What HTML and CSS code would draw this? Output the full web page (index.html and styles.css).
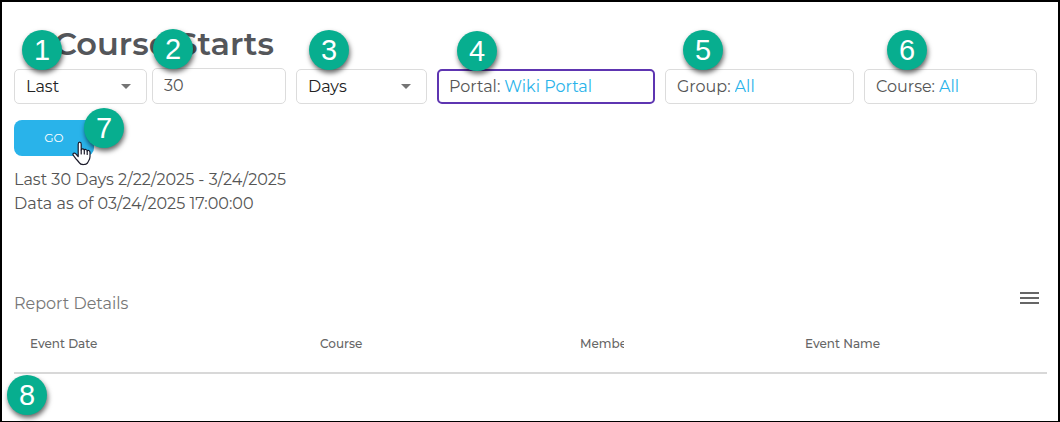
FILE: index.html
```html
<!DOCTYPE html>
<html lang="en">
<head>
    <meta charset="UTF-8">
    <meta name="viewport" content="width=device-width, initial-scale=1.0">
    <title>Course Starts</title>
    <link rel="stylesheet" href="styles.css">
</head>
<body>
    <main class="page">
        <h1>Course Starts</h1>

        <form class="filters" onsubmit="return false">
            <div class="filter-row">
                <div class="filter-pair">
                    <div class="field field-select">
                        <select id="range" aria-label="Range">
                            <option>Last</option>
                        </select>
                        <span class="badge badge-1">1</span>
                    </div>
                    <div class="field field-amount">
                        <input type="text" id="amount" value="30" aria-label="Amount">
                        <span class="badge badge-2">2</span>
                    </div>
                </div>
                <div class="field field-select">
                    <select id="unit" aria-label="Unit">
                        <option>Days</option>
                    </select>
                    <span class="badge badge-3">3</span>
                </div>
                <div class="field field-active">
                    <label for="portal">Portal:</label>
                    <input type="text" id="portal" class="value" value="Wiki Portal">
                    <span class="badge badge-4">4</span>
                </div>
                <div class="field">
                    <label for="group">Group:</label>
                    <input type="text" id="group" class="value" value="All">
                    <span class="badge badge-5">5</span>
                </div>
                <div class="field">
                    <label for="course">Course:</label>
                    <input type="text" id="course" class="value" value="All">
                    <span class="badge badge-6">6</span>
                </div>
            </div>

            <div class="actions">
                <button type="submit" class="btn-go">GO</button>
                <span class="badge badge-7">7</span>
                <svg class="pointer" width="20" height="26" viewBox="0 0 20 26" aria-hidden="true">
                    <path d="M6.2 15.5V3.2C6.2 0.5 9.2 0.5 9.2 3.2V9C9.6 7.4 12 7.6 12.3 9.2C12.8 8 14.9 8.3 15.2 10C15.8 8.9 18 9.4 18 11.4V15.8C18 18.4 16.8 19.6 15.8 21.4C14.6 24.2 8.6 24.2 7.2 21.6C6 19.6 4.4 18.6 3.2 16.8L1.2 14.2C0.3 12.6 2.2 11.4 3.6 12.6L6.2 15.5Z" fill="#fff" stroke="#1a1a2a" stroke-width="1.2" stroke-linejoin="round"/>
                    <path d="M9.2 9V13M12.3 9.2V13M15.2 10V13.5" fill="none" stroke="#1a1a2a" stroke-width="1.2" stroke-linecap="round"/>
                </svg>
            </div>
        </form>

        <div class="summary">
            <p>Last 30 Days 2/22/2025 - 3/24/2025</p>
            <p>Data as of 03/24/2025 17:00:00</p>
        </div>

        <section class="report">
            <div class="report-header">
                <h2>Report Details</h2>
                <button type="button" class="btn-menu" aria-label="Report menu">
                    <svg width="20" height="12" viewBox="0 0 20 12">
                        <path d="M0 1H19M0 6H19M0 11H19" stroke="#666" stroke-width="2"/>
                    </svg>
                </button>
            </div>
            <table>
                <thead>
                    <tr>
                        <th class="col-date">Event Date</th>
                        <th class="col-course">Course</th>
                        <th class="col-member"><span class="clipped">Member</span></th>
                        <th>Event Name</th>
                    </tr>
                </thead>
            </table>
            <span class="badge badge-8">8</span>
        </section>
    </main>
</body>
</html>
```

FILE: styles.css
```css
* {
    box-sizing: border-box;
}

body {
    margin: 0;
    font-family: Montserrat, Inter, sans-serif;
    font-size: 16px;
    line-height: 24px;
    font-weight: 400;
    color: #555;
    background: #fff;
}

.page {
    min-height: 100vh;
    padding: 22px 11px 0 12px;
    border: 2px solid #000;
    border-bottom-width: 1px;
}

h1 {
    margin: 0 0 4px;
    padding-left: 40px;
    font-size: 32px;
    line-height: 40px;
    font-weight: 600;
    color: #54565a;
}

input,
select,
button {
    font: inherit;
}

.filter-row {
    display: grid;
    grid-template-columns: 272fr 131fr 218fr 189fr 173fr;
    align-items: end;
    gap: 10px;
    padding-right: 10px;
}

.filter-pair {
    display: grid;
    grid-template-columns: 133fr 134fr;
    align-items: end;
    gap: 5px;
}

.field {
    position: relative;
    display: flex;
    align-items: center;
    gap: 4px;
    height: 35px;
    padding: 0 11px;
    border: 1px solid #dcdcdc;
    border-radius: 5px;
}

.field input,
.field select {
    flex: 1;
    min-width: 0;
    width: 100%;
    padding: 0;
    border: none;
    outline: none;
    background: none;
    color: #555;
}

.field select {
    appearance: none;
    color: #222;
}

.field .value {
    color: #29b3ea;
}

.field-select::after {
    content: "";
    margin-right: 4px;
    border: 5px solid transparent;
    border-top-color: #757575;
    border-bottom: none;
}

.field-amount {
    height: 36px;
}

.field-active {
    padding: 0 10px;
    border: 2px solid #5e35b1;
}

.actions {
    position: relative;
    display: flex;
    margin: 16px 0 12px;
}

.btn-go {
    width: 80px;
    height: 36px;
    border: none;
    border-radius: 8px;
    background: #29b3ea;
    color: #fff;
    font-size: 12px;
    cursor: pointer;
}

.pointer {
    position: absolute;
    left: 58px;
    top: 21px;
}

.summary p {
    margin: 0;
}

.report {
    position: relative;
    margin-top: 70px;
}

.report-header {
    display: flex;
    align-items: flex-start;
    justify-content: space-between;
    padding: 5px 7px 0 0;
}

h2 {
    margin: 0;
    padding-top: 1px;
    font-size: 16px;
    font-weight: 400;
    color: #777;
}

.btn-menu {
    display: flex;
    padding: 1px 0;
    border: none;
    background: none;
    cursor: pointer;
}

table {
    width: 100%;
    table-layout: fixed;
    border-collapse: collapse;
}

th {
    height: 57px;
    padding: 0 0 0 16px;
    border-bottom: 2px solid #d8d8d8;
    text-align: left;
    font-size: 12px;
    font-weight: 500;
    color: #666;
}

.col-date { width: 290px; }
.col-course { width: 260px; }
.col-member { width: 225px; }

.clipped {
    display: block;
    width: 44px;
    overflow: hidden;
}

/* numbered callouts */
.badge {
    position: absolute;
    top: -40px;
    width: 40px;
    height: 40px;
    border-radius: 50%;
    background: #07ae8f;
    box-shadow: 1px 3px 5px rgba(0, 0, 0, 0.6);
    color: #fff;
    font-family: "Liberation Sans", Arial, sans-serif;
    font-size: 29px;
    font-weight: 400;
    line-height: 41px;
    text-align: center;
}

.badge-1 { left: 7px; }
.badge-2 { left: 0; }
.badge-3 { left: 12px; }
.badge-4 { left: 18px; }
.badge-5 { left: 17px; }
.badge-6 { left: 22px; }
.badge-7 { left: 70px; top: -12px; }
.badge-8 { left: -7px; top: 89px; }
```
